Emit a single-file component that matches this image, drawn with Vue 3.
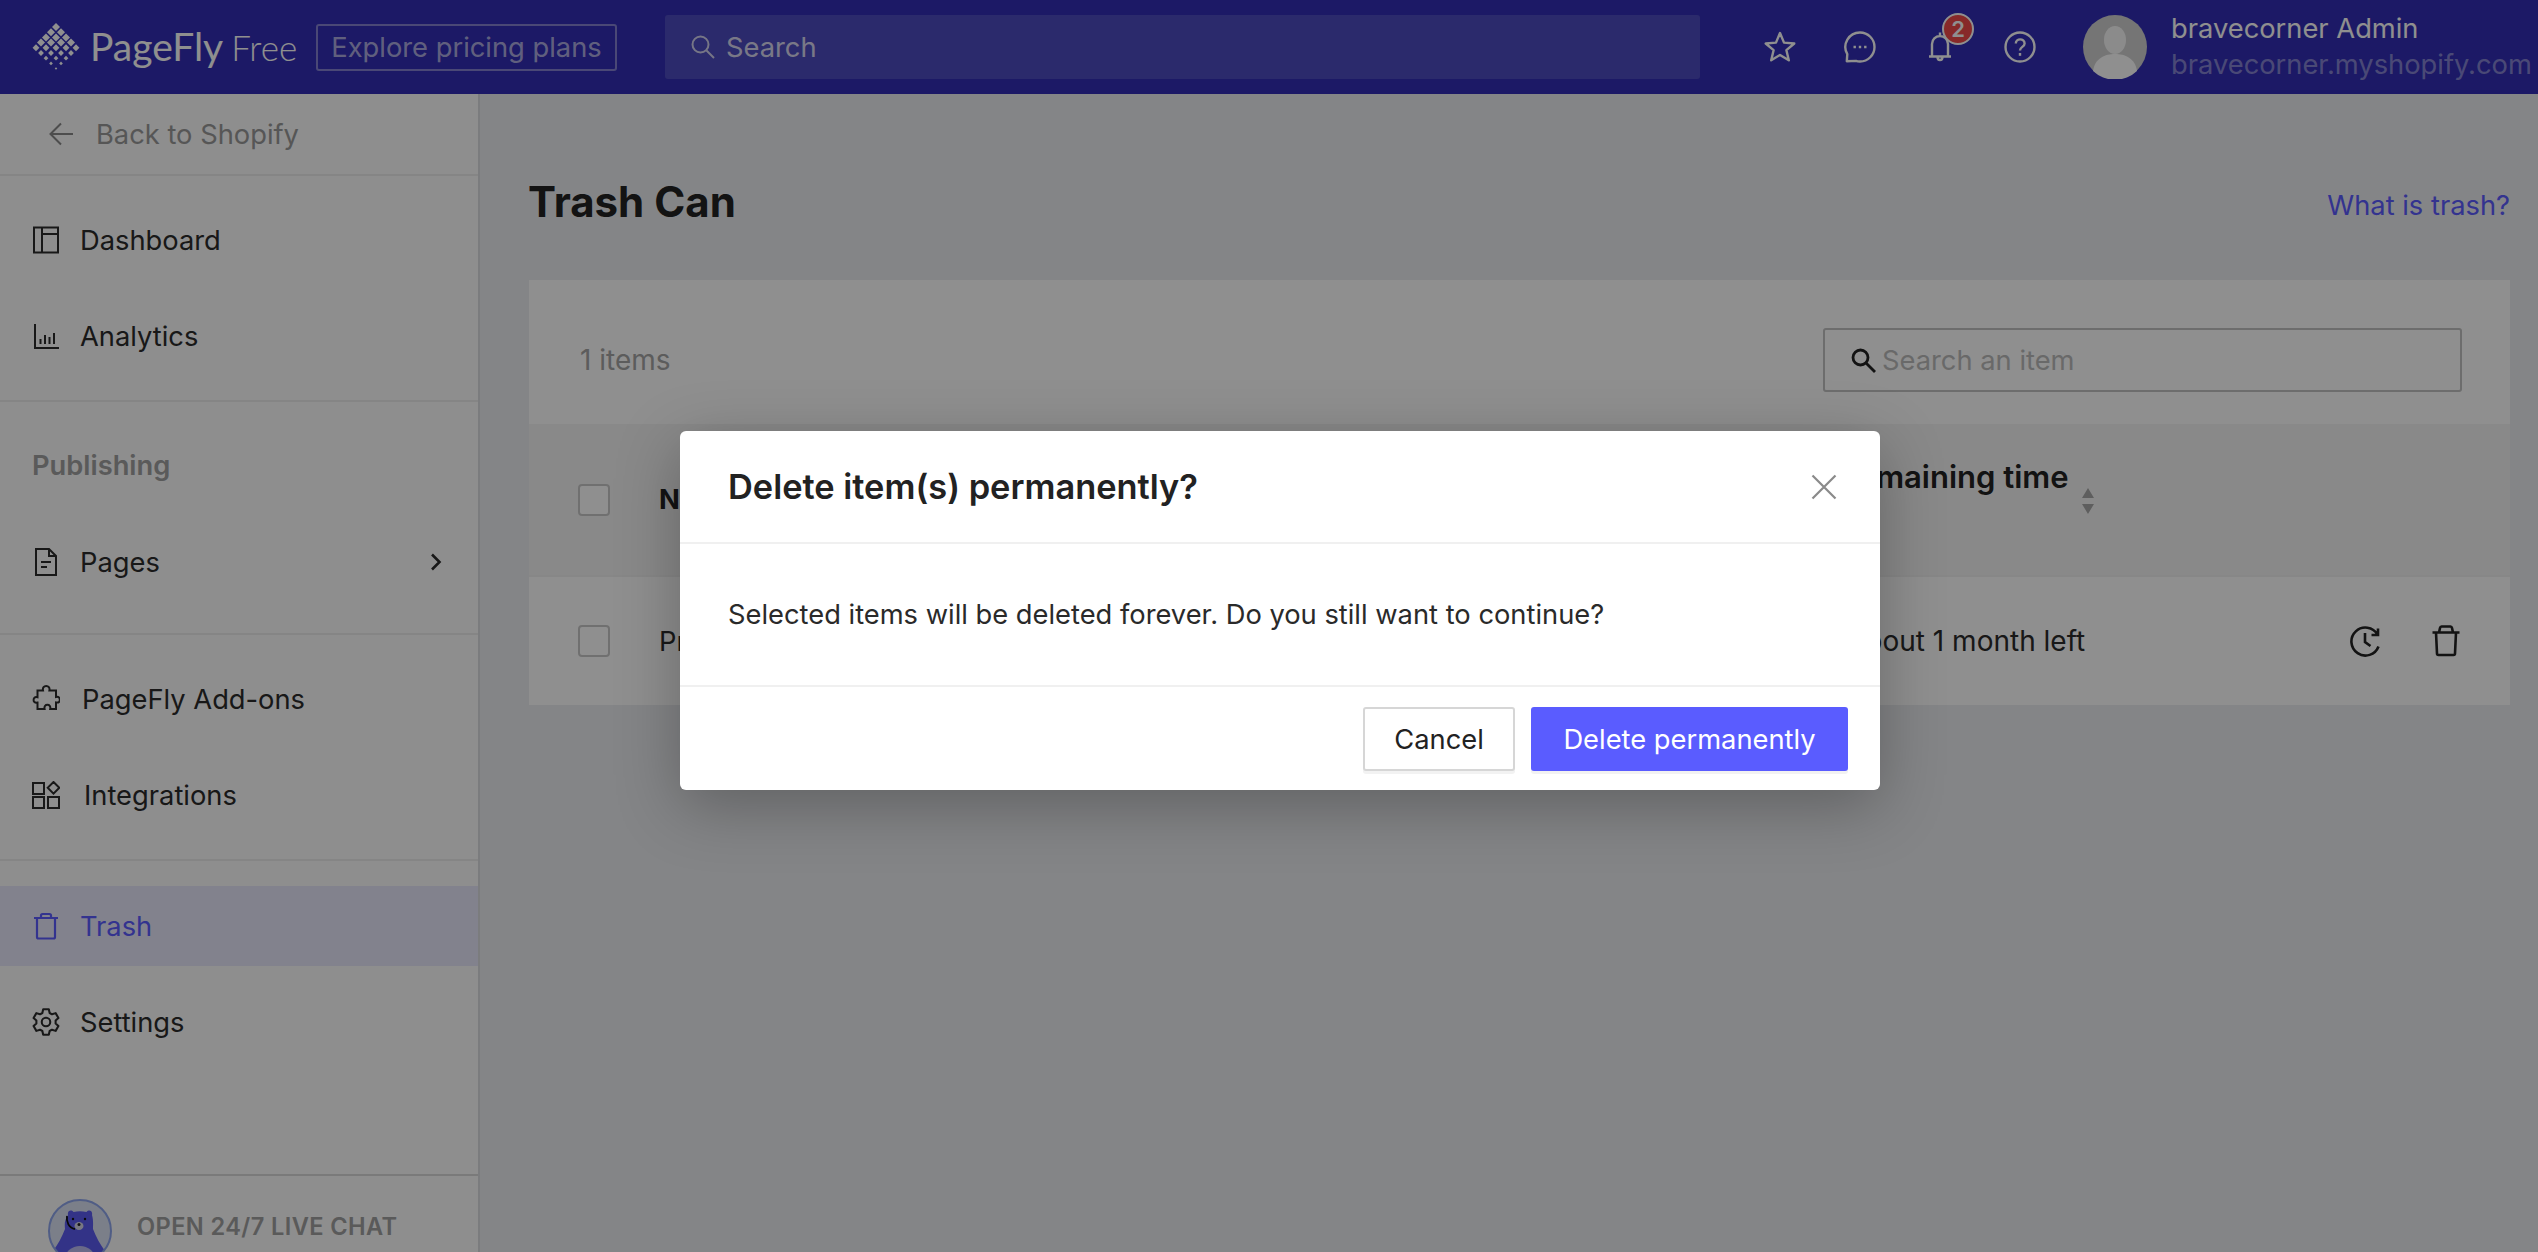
<script setup>
import { computed } from 'vue';

const logoRows = [1, 2, 3, 4, 5, 4, 3, 2, 1];

const logoDots = computed(() => {
  const dots = [];
  logoRows.forEach((count, row) => {
    for (let i = 0; i < count; i++) {
      dots.push({
        key: row + '-' + i,
        x: 24 + (i - (count - 1) / 2) * 10,
        y: 4 + row * 5.2,
        size: row < 4 ? 4 : 4 - (row - 3) * 0.55,
      });
    }
  });
  return dots;
});

const diamond = (d) =>
  `${d.x},${d.y - d.size} ${d.x + d.size},${d.y} ${d.x},${d.y + d.size} ${d.x - d.size},${d.y}`;

const mainNav = [
  {
    label: 'Dashboard',
    icon: 'M2 1.500h24v25h-24zM10 1.500v25M10 8h16',
  },
  {
    label: 'Analytics',
    icon: 'M3 2v24h24M8.500 22v-5M13 22v-9M17.500 22v-7M22 22v-11',
  },
];

const addonNav = [
  {
    label: 'PageFly Add-ons',
    textClass: 'wide-a',
    icon: 'M11 5.500c-.6-3 1-4.500 3.200-4.500s3.800 1.500 3.200 4.500h6.600v6.500c3-.6 3.800 1 3.800 2.700s-.8 3.300-3.800 2.700v6.600h-5.800c.6-3-.9-4.200-2.800-4.200s-3.400 1.200-2.800 4.200h-7.100v-6.400c-3 .6-3.900-1-3.900-2.700s.9-3.300 3.900-2.700v-6.700z',
  },
  {
    label: 'Integrations',
    textClass: 'wide-b',
    icon: 'M1 2h11v11h-11zM1 16h11v11h-11zM16 16h11v11h-11zM21.500 1l5.800 5.800-5.800 5.800-5.800-5.800z',
  },
];
</script>

<template>
  <div class="app">
    <header class="topbar">
      <div class="brand">
        <svg class="logo" viewBox="0 0 48 48" fill="#fff">
          <polygon v-for="d in logoDots" :key="d.key" :points="diamond(d)" />
        </svg>
        <span class="brand-name">PageFly</span>
        <span class="brand-plan">Free</span>
      </div>
      <a class="pricing">Explore pricing plans</a>
      <div class="top-search">
        <svg width="26" height="26" viewBox="0 0 26 26" fill="none" stroke="#fff" stroke-width="2">
          <circle cx="10.500" cy="10.500" r="8" />
          <path d="M16.500 16.500l7.500 7.500" />
        </svg>
        <span>Search</span>
      </div>
      <div class="top-icons">
        <svg width="32" height="32" viewBox="0 0 32 32" fill="none" stroke="#fff" stroke-width="2.400" stroke-linejoin="round">
          <path d="M16 2l4 9.600 10.300 .9-7.900 6.700 2.400 10.100-8.800-5.400-8.800 5.400 2.400-10.100-7.900-6.700 10.300-.9z" />
        </svg>
        <svg width="32" height="32" viewBox="0 0 32 32" fill="none" stroke="#fff" stroke-width="2.400" stroke-linejoin="round">
          <path d="M16 1.500a14.500 14.500 0 1 1 0 29c-1.500 0-3-.2-4-.6l-9.200 .3 .5-7a14.500 14.500 0 0 1 12.700-21.700z" />
          <path d="M9.500 16h2.400M14.800 16h2.400M20.100 16h2.400" />
        </svg>
        <div class="bell">
          <svg width="32" height="32" viewBox="0 0 32 32" fill="none" stroke="#fff" stroke-width="2.400" stroke-linejoin="round">
            <path d="M8 25v-12c0-4.500 3.500-8 8-8s8 3.500 8 8v12M16 1.500v3.500M5 25.500h22M13.500 26c0 4 5 4 5 0" />
          </svg>
          <span class="badge">2</span>
        </div>
        <svg width="32" height="32" viewBox="0 0 32 32" fill="none" stroke="#fff" stroke-width="2.400">
          <circle cx="16" cy="16" r="14.500" />
          <path d="M11.800 12.500c0-5.500 8.800-5.500 8.800 0 0 3.500-4.600 3.300-4.600 7" />
          <path d="M16 22v2.800" />
        </svg>
      </div>
      <div class="account">
        <svg class="avatar" viewBox="0 0 64 64">
          <circle cx="32" cy="32" r="32" fill="#d0d0d0" />
          <ellipse cx="32" cy="25" rx="11" ry="14" fill="#fff" opacity=".85" />
          <path d="M10 56c2-13 12-17 22-17s20 4 22 17a32 32 0 0 1-44 0z" fill="#fff" />
        </svg>
        <div class="account-text">
          <div class="account-name">bravecorner Admin</div>
          <div class="account-shop">bravecorner.myshopify.com</div>
        </div>
      </div>
    </header>

    <div class="layout">
      <aside class="sidebar">
        <a class="back">
          <svg width="26" height="26" viewBox="0 0 26 26" fill="none" stroke="#8a8a8a" stroke-width="2">
            <path d="M24 13h-22M12 2.500l-10.500 10.500 10.500 10.500" />
          </svg>
          <span>Back to Shopify</span>
        </a>

        <nav class="nav-group first">
          <a v-for="item in mainNav" :key="item.label" class="nav-item">
            <svg class="nav-icon" viewBox="0 0 28 28" fill="none" stroke="currentColor" stroke-width="2">
              <path :d="item.icon" />
            </svg>
            <span>{{ item.label }}</span>
          </a>
        </nav>

        <nav class="nav-group publishing">
          <div class="nav-title">Publishing</div>
          <a class="nav-item">
            <svg class="nav-icon" viewBox="0 0 28 28" fill="none" stroke="currentColor" stroke-width="2">
              <path d="M4 1h13l7 7v19h-20zM17 1v7h7M9 14h10M9 19h6" />
            </svg>
            <span>Pages</span>
            <svg class="chevron" width="14" height="20" viewBox="0 0 14 20" fill="none" stroke="currentColor" stroke-width="2.600">
              <path d="M3 2.500l7.500 7.500-7.500 7.500" />
            </svg>
          </a>
        </nav>

        <nav class="nav-group addons">
          <a v-for="item in addonNav" :key="item.label" class="nav-item" :class="item.textClass">
            <svg class="nav-icon" viewBox="0 0 28 28" fill="none" stroke="currentColor" stroke-width="2">
              <path :d="item.icon" />
            </svg>
            <span>{{ item.label }}</span>
          </a>
        </nav>

        <nav class="nav-group last">
          <a class="nav-item active">
            <svg class="nav-icon" viewBox="0 0 28 28" fill="none" stroke="currentColor" stroke-width="2.200">
              <path d="M2 6h24M9 6v-2.500c0-1 .6-1.500 1.500-1.500h7c.9 0 1.500 .5 1.500 1.500v2.500M5 6v19c0 1 .6 1.500 1.500 1.500h15c.9 0 1.500-.5 1.500-1.500v-19" />
            </svg>
            <span>Trash</span>
          </a>
          <a class="nav-item">
            <svg class="nav-icon" viewBox="1 .5 22 23" fill="none" stroke="currentColor" stroke-width="1.700" stroke-linejoin="round">
              <circle cx="12" cy="12" r="3.500" />
              <path d="M9.700 1.500h4.600l.7 3.100 1.900 1.100 3-1 2.300 4-2.300 2.100v2.400l2.300 2.100-2.300 4-3-1-1.900 1.100-.7 3.100h-4.600l-.7-3.100-1.900-1.100-3 1-2.300-4 2.300-2.100v-2.400l-2.300-2.100 2.300-4 3 1 1.900-1.100z" />
            </svg>
            <span>Settings</span>
          </a>
        </nav>

        <div class="chat">
          <svg class="bear" viewBox="0 0 64 64">
            <defs>
              <clipPath id="bear-clip">
                <circle cx="32" cy="32" r="31" />
              </clipPath>
            </defs>
            <circle cx="32" cy="32" r="31" fill="#dbe3f5" />
            <g clip-path="url(#bear-clip)">
              <path d="M20 16c-1-4 3-6 5.500-3 4-1 9-1 13 0 2.500-3 6.500-1 5.500 3 1.500 5 1 10 1 14 3 8 7 15 12 22v14h-52v-14c5-7 9-14 12-22-.5-5-.5-9 3-14z" fill="#5c5cf0" />
              <ellipse cx="32" cy="60" rx="15" ry="13" fill="#bdbdf2" />
            </g>
            <circle cx="32" cy="32" r="31" fill="none" stroke="#8fa6ee" stroke-width="2" />
            <ellipse cx="31" cy="27" rx="4.500" ry="4" fill="#d6d6e8" />
            <circle cx="25" cy="20" r="1.200" fill="#111" />
            <circle cx="37" cy="20" r="1.200" fill="#111" />
            <circle cx="31" cy="25.500" r="1.500" fill="#222" />
            <path d="M19 17c-1 6 2 12 8 13" fill="none" stroke="#111" stroke-width="1.800" />
          </svg>
          <span>OPEN 24/7 LIVE CHAT</span>
        </div>
      </aside>

      <main class="content">
        <div class="page-head">
          <h1>Trash Can</h1>
          <a class="help-link">What is trash?</a>
        </div>

        <section class="card">
          <div class="card-tools">
            <span class="count">1 items</span>
            <div class="item-search">
              <svg width="28" height="28" viewBox="0 0 28 28" fill="none" stroke="#222" stroke-width="2.800">
                <circle cx="11.500" cy="11.500" r="7.500" />
                <path d="M17 17l9 9" />
              </svg>
              <span>Search an item</span>
            </div>
          </div>
          <div class="table-row table-head">
            <span class="check"></span>
            <span class="col-name">Name</span>
            <span class="col-time">
              Remaining time
              <svg class="sort" width="14" height="26" viewBox="0 0 14 26" fill="#a8a8a8">
                <path d="M7 0l6 10h-12zM7 26l-6-10h12z" />
              </svg>
            </span>
          </div>
          <div class="table-row item-row">
            <span class="check"></span>
            <span class="col-name">Product</span>
            <span class="col-time">About 1 month left</span>
            <div class="row-actions">
              <svg width="34" height="34" viewBox="0 0 34 34" fill="none" stroke="#222" stroke-width="2.600">
                <path d="M30.500 22.500a14 14 0 1 1-1-12M30 4.500v6.500h-6.500M17 9v9l5.500 4" />
              </svg>
              <svg width="30" height="32" viewBox="0 0 30 32" fill="none" stroke="#222" stroke-width="2.600" stroke-linejoin="round">
                <path d="M1.500 7.500h27M8 7.500l1-4.500c.2-1 .8-1.500 1.500-1.500h9c.7 0 1.300 .5 1.500 1.500l1 4.500M5 7.500l1 21c0 1 .8 1.500 1.500 1.500h15c.7 0 1.500-.5 1.500-1.500l1-21" />
              </svg>
            </div>
          </div>
        </section>
      </main>
    </div>

    <div class="overlay">
      <div class="modal">
        <div class="modal-head">
          <h2>Delete item(s) permanently?</h2>
          <svg class="close" width="26" height="26" viewBox="0 0 26 26" fill="none" stroke="#8a8a8a" stroke-width="2.200">
            <path d="M1.500 1.500l23 23M24.500 1.500l-23 23" />
          </svg>
        </div>
        <div class="modal-body">Selected items will be deleted forever. Do you still want to continue?</div>
        <div class="modal-foot">
          <button class="btn btn-cancel">Cancel</button>
          <button class="btn btn-danger">Delete permanently</button>
        </div>
      </div>
    </div>
  </div>
</template>

<style>
html,
body {
  margin: 0;
  background: #ecedf1;
}
</style>

<style scoped>
.app {
  position: relative;
  display: flex;
  flex-direction: column;
  width: 2538px;
  height: 1252px;
  overflow: hidden;
  font-family: Inter, "Liberation Sans", sans-serif;
  font-size: 27.3px;
  color: #2c2c2c;
  background: #ecedf1;
}

a {
  text-decoration: none;
}

/* top bar */
.topbar {
  display: flex;
  align-items: center;
  flex: none;
  height: 94px;
  background: #322eb6;
  color: #fff;
}

.topbar > * {
  flex: none;
}

.brand {
  display: flex;
  align-items: baseline;
  width: 316px;
  padding-left: 32px;
  box-sizing: border-box;
}

.logo {
  align-self: center;
  width: 48px;
  height: 48px;
}

.brand-name {
  margin-left: 10px;
  font-family: Lato, Inter, sans-serif;
  font-size: 39px;
}

.brand-plan {
  margin-left: 8px;
  font-family: Lato, Inter, sans-serif;
  font-size: 35px;
  font-weight: 300;
}

.pricing {
  box-sizing: border-box;
  width: 301px;
  height: 47px;
  border: 2px solid rgba(255, 255, 255, 0.4);
  border-radius: 3px;
  color: rgba(255, 255, 255, 0.62);
  line-height: 43px;
  text-align: center;
  white-space: nowrap;
}

.top-search {
  display: flex;
  align-items: center;
  gap: 10px;
  box-sizing: border-box;
  width: 1035px;
  height: 64px;
  margin-left: 48px;
  padding-left: 25px;
  border-radius: 3px;
  background: rgba(255, 255, 255, 0.14);
  color: rgba(255, 255, 255, 0.8);
}

.top-search svg {
  opacity: 0.75;
}

.top-icons {
  display: flex;
  align-items: center;
  gap: 48px;
  margin-left: 64px;
}

.bell {
  position: relative;
  width: 32px;
  height: 32px;
}

.badge {
  position: absolute;
  top: -18px;
  left: 18px;
  width: 28px;
  height: 28px;
  border: 2px solid #fff;
  border-radius: 50%;
  background: #f04a4a;
  font-size: 22px;
  font-weight: 600;
  line-height: 28px;
  text-align: center;
}

.account {
  display: flex;
  align-items: center;
  gap: 24px;
  margin-left: 47px;
}

.avatar {
  width: 64px;
  height: 64px;
}

.account-text {
  line-height: 36px;
  white-space: nowrap;
}

.account-shop {
  color: rgba(255, 255, 255, 0.42);
}

/* sidebar */
.layout {
  display: flex;
  flex: 1;
  min-height: 0;
}

.sidebar {
  display: flex;
  flex: none;
  flex-direction: column;
  box-sizing: border-box;
  width: 480px;
  border-right: 2px solid #dcdde0;
  background: #fdfdfd;
}

.back {
  display: flex;
  align-items: center;
  gap: 21px;
  flex: none;
  box-sizing: border-box;
  height: 82px;
  padding-left: 49px;
  border-bottom: 2px solid #eee;
  color: #9a9a9a;
}

.nav-group {
  display: flex;
  flex-direction: column;
  flex: none;
  gap: 16px;
  padding: 26px 0 24px;
  border-bottom: 2px solid #eee;
}

.nav-group.first {
  padding-top: 24px;
}

.nav-group.addons {
  padding-top: 24px;
}

.nav-group.publishing {
  gap: 0;
  padding: 0 0 31px;
}

.nav-group.last {
  flex: 1;
  border-bottom: 0;
  padding-top: 25px;
  padding-bottom: 0;
}

.nav-title {
  height: 120px;
  padding-left: 32px;
  box-sizing: border-box;
  color: #a0a0a0;
  font-weight: 600;
  line-height: 128px;
}

.nav-item {
  display: flex;
  align-items: center;
  gap: 20px;
  flex: none;
  height: 80px;
  padding: 0 32px;
  color: #2c2c2c;
}

.nav-item.wide-a {
  gap: 22px;
}

.nav-item.wide-b {
  gap: 24px;
}

.nav-item.active {
  background: #e8e8fc;
  color: #5c5cff;
}

.nav-icon {
  flex: none;
  width: 28px;
  height: 28px;
}

.chevron {
  margin-right: 3px;
  margin-left: auto;
  color: #2c2c2c;
}

.chat {
  display: flex;
  align-items: center;
  gap: 25px;
  flex: none;
  height: 76px;
  padding-left: 48px;
  border-top: 2px solid #d9d9d9;
  color: #a0a0a0;
  font-size: 23.6px;
  font-weight: 600;
  letter-spacing: 0.4px;
}

.bear {
  flex: none;
  width: 64px;
  height: 64px;
  margin-top: 34px;
}

.chat span {
  margin-top: 24px;
}

/* content */
.content {
  flex: 1;
  min-width: 0;
  padding-right: 28px;
  padding-left: 49px;
}

.page-head {
  display: flex;
  align-items: flex-end;
  justify-content: space-between;
  height: 186px;
}

.page-head h1 {
  margin: 0 0 54px -1px;
  color: #222;
  font-size: 42px;
  font-weight: 700;
  line-height: 48px;
}

.help-link {
  margin-bottom: 56px;
  color: #5c5cff;
  line-height: 36px;
}

.card {
  background: #fff;
}

.card-tools {
  display: flex;
  align-items: center;
  justify-content: space-between;
  box-sizing: border-box;
  height: 144px;
  padding: 16px 48px 0 51px;
}

.count {
  color: #a4a4a4;
  font-size: 28px;
}

.item-search {
  display: flex;
  align-items: center;
  gap: 5px;
  box-sizing: border-box;
  width: 639px;
  height: 64px;
  padding-left: 24px;
  border: 2px solid #c2c2c2;
  border-radius: 3px;
  color: #bcbcbc;
}

.table-row {
  position: relative;
  display: flex;
  align-items: center;
  box-sizing: border-box;
  padding-left: 49px;
}

.table-head {
  height: 153px;
  border-bottom: 2px solid #f0f0f0;
  background: #f5f5f5;
  color: #222;
  font-weight: 700;
}

.item-row {
  height: 128px;
}

.check {
  flex: none;
  box-sizing: border-box;
  width: 32px;
  height: 32px;
  border: 2px solid #c8c8c8;
  border-radius: 4px;
  background: #fff;
}

.col-name {
  margin-left: 49px;
}

.col-time {
  position: absolute;
  left: 1317px;
  font-size: 28px;
  white-space: nowrap;
}

.table-head .col-time {
  top: 34px;
  left: 1309px;
  font-size: 31px;
  font-weight: 600;
  line-height: 38px;
}

.sort {
  position: absolute;
  top: 30px;
  left: 243px;
}

.row-actions {
  position: absolute;
  right: 49px;
  display: flex;
  align-items: center;
  gap: 49px;
}

/* modal */
.overlay {
  position: absolute;
  inset: 0;
  display: flex;
  align-items: flex-start;
  justify-content: center;
  box-sizing: border-box;
  padding: 431px 0 0 22px;
  background: rgba(0, 0, 0, 0.44);
}

.modal {
  width: 1200px;
  border-radius: 6px;
  background: #fff;
  box-shadow: 0 16px 64px rgba(0, 0, 0, 0.28);
}

.modal-head {
  display: flex;
  align-items: center;
  justify-content: space-between;
  box-sizing: border-box;
  height: 113px;
  padding: 0 43px 0 48px;
  border-bottom: 2px solid #f0f0f0;
}

.modal-head h2 {
  margin: 0;
  color: #222;
  font-size: 34.4px;
  font-weight: 600;
}

.modal-body {
  box-sizing: border-box;
  height: 143px;
  padding-left: 48px;
  border-bottom: 2px solid #f0f0f0;
  color: #2a2a2a;
  line-height: 142px;
}

.modal-foot {
  display: flex;
  justify-content: flex-end;
  gap: 16px;
  padding: 20px 32px 19px;
}

.btn {
  box-sizing: border-box;
  height: 64px;
  border-radius: 3px;
  font-family: inherit;
  font-size: 27.3px;
  box-shadow: 0 3px 0 #f2f2f2;
}

.btn-cancel {
  width: 152px;
  border: 2px solid #d6d6d6;
  background: #fff;
  color: #222;
}

.btn-danger {
  width: 317px;
  border: 0;
  background: #5a5cff;
  color: #fff;
}
</style>
